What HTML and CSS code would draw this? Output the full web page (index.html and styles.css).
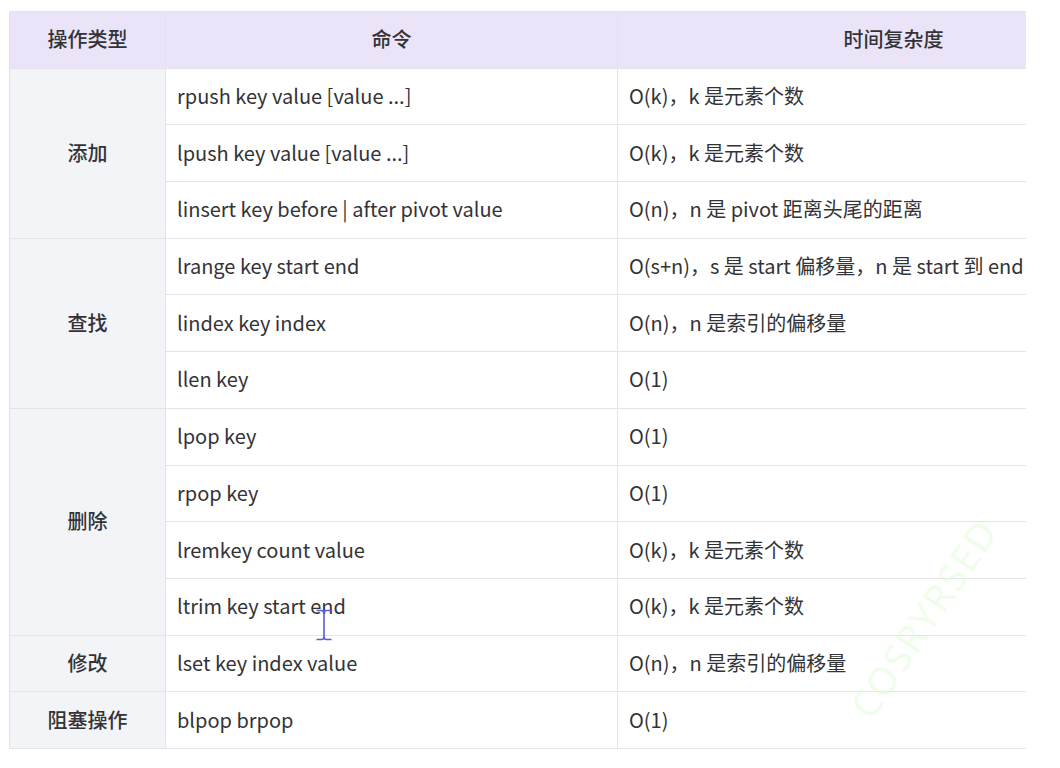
FILE: index.html
```html
<!DOCTYPE html>
<html lang="zh-CN">
<head>
<meta charset="utf-8">
<title>List 命令</title>
<link rel="stylesheet" href="styles.css">
</head>
<body>
<div class="frame">
  <div class="scroller">
    <table class="cmd-table">
      <colgroup>
        <col class="c-type">
        <col class="c-cmd">
        <col class="c-time">
      </colgroup>
      <thead>
        <tr><th>操作类型</th><th>命令</th><th>时间复杂度</th></tr>
      </thead>
      <tbody>
        <tr><td class="type" rowspan="3">添加</td><td>rpush key value [value ...]</td><td>O(k)，k 是元素个数</td></tr>
        <tr><td>lpush key value [value ...]</td><td>O(k)，k 是元素个数</td></tr>
        <tr><td>linsert key before | after pivot value</td><td>O(n)，n 是 pivot 距离头尾的距离</td></tr>
        <tr><td class="type" rowspan="3">查找</td><td>lrange key start end</td><td>O(s+n)，s 是 start 偏移量，n 是 start 到 end</td></tr>
        <tr><td>lindex key index</td><td>O(n)，n 是索引的偏移量</td></tr>
        <tr><td>llen key</td><td>O(1)</td></tr>
        <tr><td class="type" rowspan="4">删除</td><td>lpop key</td><td>O(1)</td></tr>
        <tr><td>rpop key</td><td>O(1)</td></tr>
        <tr><td>lremkey count value</td><td>O(k)，k 是元素个数</td></tr>
        <tr><td>ltrim key start end</td><td>O(k)，k 是元素个数</td></tr>
        <tr><td class="type">修改</td><td>lset key index value</td><td>O(n)，n 是索引的偏移量</td></tr>
        <tr><td class="type">阻塞操作</td><td>blpop brpop</td><td>O(1)</td></tr>
      </tbody>
    </table>
  </div>
  <div class="watermark">COSRYRSED</div>
  <svg class="ibeam" width="18" height="32" viewBox="0 0 18 32" aria-hidden="true">
    <path d="M1.5 1.5 H6.5 Q9 1.5 9 4 V28 Q9 30.5 6.5 30.5 H1.5 M16.5 1.5 H11.5 Q9 1.5 9 4 M9 28 Q9 30.5 11.5 30.5 H16.5" fill="none" stroke="#5a5fd0" stroke-width="1.6"/>
  </svg>
</div>
</body>
</html>
```

FILE: styles.css
```css
html, body {
  margin: 0;
  padding: 0;
  background: #ffffff;
}

body {
  font-family: "Noto Sans CJK SC", "Noto Sans", sans-serif;
  color: #333336;
}

.frame {
  position: relative;
  width: 1060px;
  height: 768px;
  overflow: hidden;
}

.scroller {
  margin: 11px 0 0 9px;
  width: 1017px;
  overflow: hidden;
}

.cmd-table {
  border-collapse: collapse;
  table-layout: fixed;
  width: 1160px;
  font-size: 20px;
}

.c-type { width: 156px; }
.c-cmd { width: 452px; }
.c-time { width: 552px; }

.cmd-table th,
.cmd-table td {
  border: 1px solid #e3e3e8;
  height: 53.7px;
  padding: 0 11px 2px;
  white-space: nowrap;
  overflow: hidden;
  vertical-align: middle;
  text-align: left;
}

.cmd-table th {
  background: #ebe4f8;
  font-weight: 500;
  text-align: center;
  color: #333336;
}

.cmd-table td.type {
  background: #f3f4f7;
  text-align: center;
  font-weight: 500;
}

.watermark {
  position: absolute;
  left: 808px;
  top: 592px;
  font-family: "Noto Sans", sans-serif;
  font-size: 38px;
  font-weight: 400;
  letter-spacing: 2px;
  color: rgba(225, 252, 215, 0.5);
  transform: rotate(-56deg);
  transform-origin: center;
  pointer-events: none;
}

.ibeam {
  position: absolute;
  left: 315px;
  top: 609px;
}
```
